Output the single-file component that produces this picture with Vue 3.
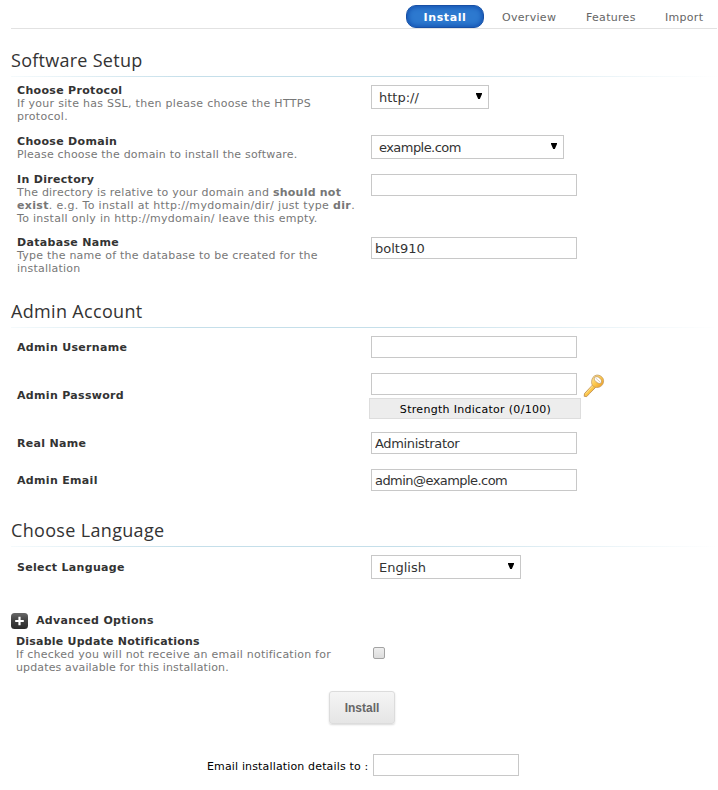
<script setup>
import { ref } from 'vue'

const tabs = ['Install', 'Overview', 'Features', 'Import']
const active = ref('Install')
const directory = ref('')
const database = ref('bolt910')
const username = ref('')
const password = ref('')
const realName = ref('Administrator')
const email = ref('admin@example.com')
const notify = ref('')
const disableUpdates = ref(false)
</script>

<template>
  <main class="page">
    <nav class="tabs">
      <a v-for="t in tabs" :key="t" class="tab" :class="[t.toLowerCase(), { active: t === active }]" @click="active = t">{{ t }}</a>
    </nav>

    <h2 class="h-software">Software Setup</h2>
    <section class="fields software">
      <div class="row r-protocol">
        <div class="label"><b>Choose Protocol</b><p>If your site has SSL, then please choose the HTTPS<br />protocol.</p></div>
        <div class="select protocol"><span>http://</span><svg class="arrow" viewBox="0 0 6 6"><path d="M0 0H6V1L3.8 6H2.2L0 1Z" /></svg></div>
      </div>
      <div class="row r-domain">
        <div class="label"><b>Choose Domain</b><p class="snug">Please choose the domain to install the software.</p></div>
        <div class="select domain"><span class="tight">example.com</span><svg class="arrow" viewBox="0 0 6 6"><path d="M0 0H6V1L3.8 6H2.2L0 1Z" /></svg></div>
      </div>
      <div class="row r-dir">
        <div class="label"><b>In Directory</b><p><span class="close">The directory is relative to your domain and <strong>should not</strong></span><br /><span class="loose"><strong>exist</strong>. e.g. To install at http://mydomain/dir/ just type <strong>dir</strong>.<br /></span>To install only in http://mydomain/ leave this empty.</p></div>
        <input v-model="directory" class="input" type="text" />
      </div>
      <div class="row r-db">
        <div class="label"><b>Database Name</b><p class="close">Type the name of the database to be created for the<br />installation</p></div>
        <input v-model="database" class="input" type="text" />
      </div>
    </section>

    <h2 class="h-admin">Admin Account</h2>
    <section class="fields">
      <div class="row single r-user">
        <b>Admin Username</b>
        <input v-model="username" class="input" type="text" />
      </div>
      <div class="row single r-pass">
        <b>Admin Password</b>
        <div class="password">
          <div class="passline">
            <input v-model="password" class="input" type="password" />
            <svg class="key" viewBox="0 0 22 24">
              <defs>
                <linearGradient id="gold" x1="0" y1="0" x2="1" y2="1">
                  <stop offset="0" stop-color="#fff0b0" />
                  <stop offset=".5" stop-color="#fcc74b" />
                  <stop offset="1" stop-color="#e8941f" />
                </linearGradient>
              </defs>
              <path d="M10 10.5L1.5 19.5L1.2 22.3L3.7 22.6L6.5 19.6L13.2 12.8Z" fill="url(#gold)" stroke="#b98545" stroke-width=".8" />
              <path d="M9.7 11.8L3 19.4" stroke="#ffe08a" stroke-width="1" />
              <path fill-rule="evenodd" d="M13.2 1.2C16.5.5 20.6 3.2 20.6 6.8C20.6 10.8 17.6 13.6 13.7 13.5C10.3 13.3 8.2 10.6 8.6 7.4C8.9 4.2 10.5 1.8 13.2 1.2ZM11.7 3.2C9.8 6 15 10.6 18 9.2C20.4 6.2 14.8.9 11.7 3.2Z" fill="url(#gold)" stroke="#c39a62" stroke-width=".8" />
              <path d="M12.6 4L17.6 8.4" stroke="#d9cdb8" stroke-width="1" />
            </svg>
          </div>
          <div class="strength">Strength Indicator (0/100)</div>
        </div>
      </div>
      <div class="row single r-name">
        <b>Real Name</b>
        <input v-model="realName" class="input name" type="text" />
      </div>
      <div class="row single r-email">
        <b>Admin Email</b>
        <input v-model="email" class="input tight" type="text" />
      </div>
    </section>

    <h2 class="h-lang">Choose Language</h2>
    <section class="fields">
      <div class="row single r-lang">
        <b>Select Language</b>
        <div class="select language"><span>English</span><svg class="arrow" viewBox="0 0 6 6"><path d="M0 0H6V1L3.8 6H2.2L0 1Z" /></svg></div>
      </div>
    </section>

    <div class="advanced">
      <svg class="plus" viewBox="0 0 17 16">
        <defs>
          <linearGradient id="dark" x1="0" y1="0" x2="0" y2="1">
            <stop offset="0" stop-color="#686868" />
            <stop offset=".5" stop-color="#404040" />
            <stop offset="1" stop-color="#292929" />
          </linearGradient>
        </defs>
        <rect width="17" height="16" rx="3.5" fill="url(#dark)" />
        <path d="M8.5 3.7V12.3M4.2 8H12.8" stroke="#fff" stroke-width="2.2" />
      </svg>
      <b>Advanced Options</b>
    </div>
    <div class="row r-updates">
      <div class="label"><b>Disable Update Notifications</b><p><span class="close">If checked you will not receive an email notification for</span><br /><span class="closer">updates available for this installation.</span></p></div>
      <input v-model="disableUpdates" class="check" type="checkbox" />
    </div>

    <div class="submit"><button type="button">Install</button></div>

    <div class="notify">
      <label>Email installation details to :</label>
      <input v-model="notify" class="input" type="text" />
    </div>
  </main>
</template>

<style>
body {
  background: #fff;
}
</style>

<style scoped>
* {
  box-sizing: border-box;
}
.page {
  width: 718px;
  height: 790px;
  overflow: hidden;
  font: 11px/13px Verdana, 'DejaVu Sans', sans-serif;
  color: #333;
}
.tabs {
  display: flex;
  align-items: flex-start;
  height: 29px;
  margin: 0 1px 0 11px;
  padding: 5px 12px 0 395px;
  border-bottom: 1px solid #e2e2e2;
}
.tab {
  height: 23px;
  line-height: 25px;
  letter-spacing: 0.3px;
  color: #666;
  white-space: nowrap;
  cursor: pointer;
}
.install { width: 78px; margin-right: 18px; }
.overview { width: 84px; }
.features { width: 79px; }
.tab.active {
  text-align: center;
  font-weight: bold;
  letter-spacing: 0.6px;
  color: #fff;
  border: 1px solid #1850a5;
  border-radius: 10px;
  line-height: 23px;
  background: #2d79cf;
  box-shadow: inset 0 0 5px 1px #124fae;
}
h2 {
  height: 33px;
  margin: 0 0 0 11px;
  font: 18px/33px 'Open Sans', 'Noto Sans', sans-serif;
  letter-spacing: 0.33px;
  color: #333;
  background: linear-gradient(to right, #f5fafc, #c5dfea 25%, #c5dfea 55%, #fff) bottom / 100% 1px no-repeat;
}
.h-software { margin-top: 15px; letter-spacing: 0.27px; }
.h-admin { margin-top: 14px; }
.h-lang { margin-top: 23px; }
.row {
  display: grid;
  grid-template-columns: 354px 1fr;
  justify-items: start;
  align-items: start;
  padding-left: 17px;
}
b { letter-spacing: 0.32px; }
.row b { display: block; white-space: nowrap; }
.row p { margin: 0; color: #777; white-space: nowrap; letter-spacing: 0.29px; }
.row p.snug { letter-spacing: 0.19px; }
.row p.close, .close { letter-spacing: 0.23px; }
.closer { letter-spacing: 0.13px; }
.loose { letter-spacing: 0.34px; }
.r-protocol { height: 51px; margin-top: 7px; }
.r-domain { height: 38px; }
.r-dir { height: 63px; }
.r-db { height: 45px; }
.r-protocol .select { margin-top: 1px; }
.r-dir .input, .r-db .input { margin-top: 1px; }
.single { align-items: center; }
.r-user { height: 22px; margin-top: 8px; }
.r-pass { height: 46px; margin-top: 15px; }
.r-pass b { margin-top: -2px; }
.r-name { height: 22px; margin-top: 13px; }
.r-email { height: 22px; margin-top: 15px; }
.r-lang { height: 24px; margin-top: 8px; }
.select {
  display: flex;
  align-items: center;
  justify-content: space-between;
  height: 24px;
  padding: 0 6px 0 7px;
  border: 1px solid #c8c8c8;
  font-size: 13px;
}
.protocol { width: 118px; }
.domain { width: 193px; }
.language { width: 150px; }
.arrow { width: 6px; height: 6px; margin-top: -2px; }
.input {
  display: block;
  width: 206px;
  height: 22px;
  margin: 0;
  padding: 0 3px;
  border: 1px solid #c8c8c8;
  background: #fff;
  font: 13px 'DejaVu Sans', sans-serif;
  color: #333;
  outline: none;
}
.tight { letter-spacing: -0.55px; }
.name { letter-spacing: -0.33px; }
.passline { display: flex; height: 22px; }
.key { width: 22px; height: 24px; margin: 1px 0 0 6px; flex: none; }
.strength {
  width: 212px;
  height: 21px;
  margin: 3px 0 0 -2px;
  padding-left: 1px;
  border: 1px solid #ddd;
  background: #ededed;
  line-height: 21px;
  letter-spacing: 0.3px;
  text-align: center;
  color: #000;
}
.advanced {
  display: flex;
  gap: 8px;
  height: 16px;
  margin: 34px 0 0 11px;
}
.advanced b { margin-top: 1px; }
.plus { width: 17px; height: 16px; }
.r-updates { height: 39px; margin-top: 6px; padding-left: 16px; }
.r-updates b { letter-spacing: 0.22px; }
.check {
  appearance: none;
  width: 12px;
  height: 12px;
  margin: 12px 0 0 3px;
  border: 1px solid #a3a3a3;
  border-radius: 2px;
  background: linear-gradient(#eee, #ddd);
}
.submit { display: flex; padding: 17px 0 0 329px; }
.submit button {
  width: 66px;
  height: 33px;
  padding: 0;
  border: 1px solid #dcdcdc;
  border-radius: 3px;
  background: linear-gradient(#f5f5f5, #e5e5e5);
  box-shadow: 0 1px 2px rgba(0, 0, 0, 0.15);
  color: #666;
  font: bold 12px 'Liberation Sans', Arial, sans-serif;
}
.notify {
  display: flex;
  align-items: center;
  height: 22px;
  margin: 30px 0 0 207px;
  color: #000;
}
.notify label { width: 166px; padding-top: 2px; white-space: nowrap; letter-spacing: 0.15px; }
.notify .input { width: 146px; }
</style>
